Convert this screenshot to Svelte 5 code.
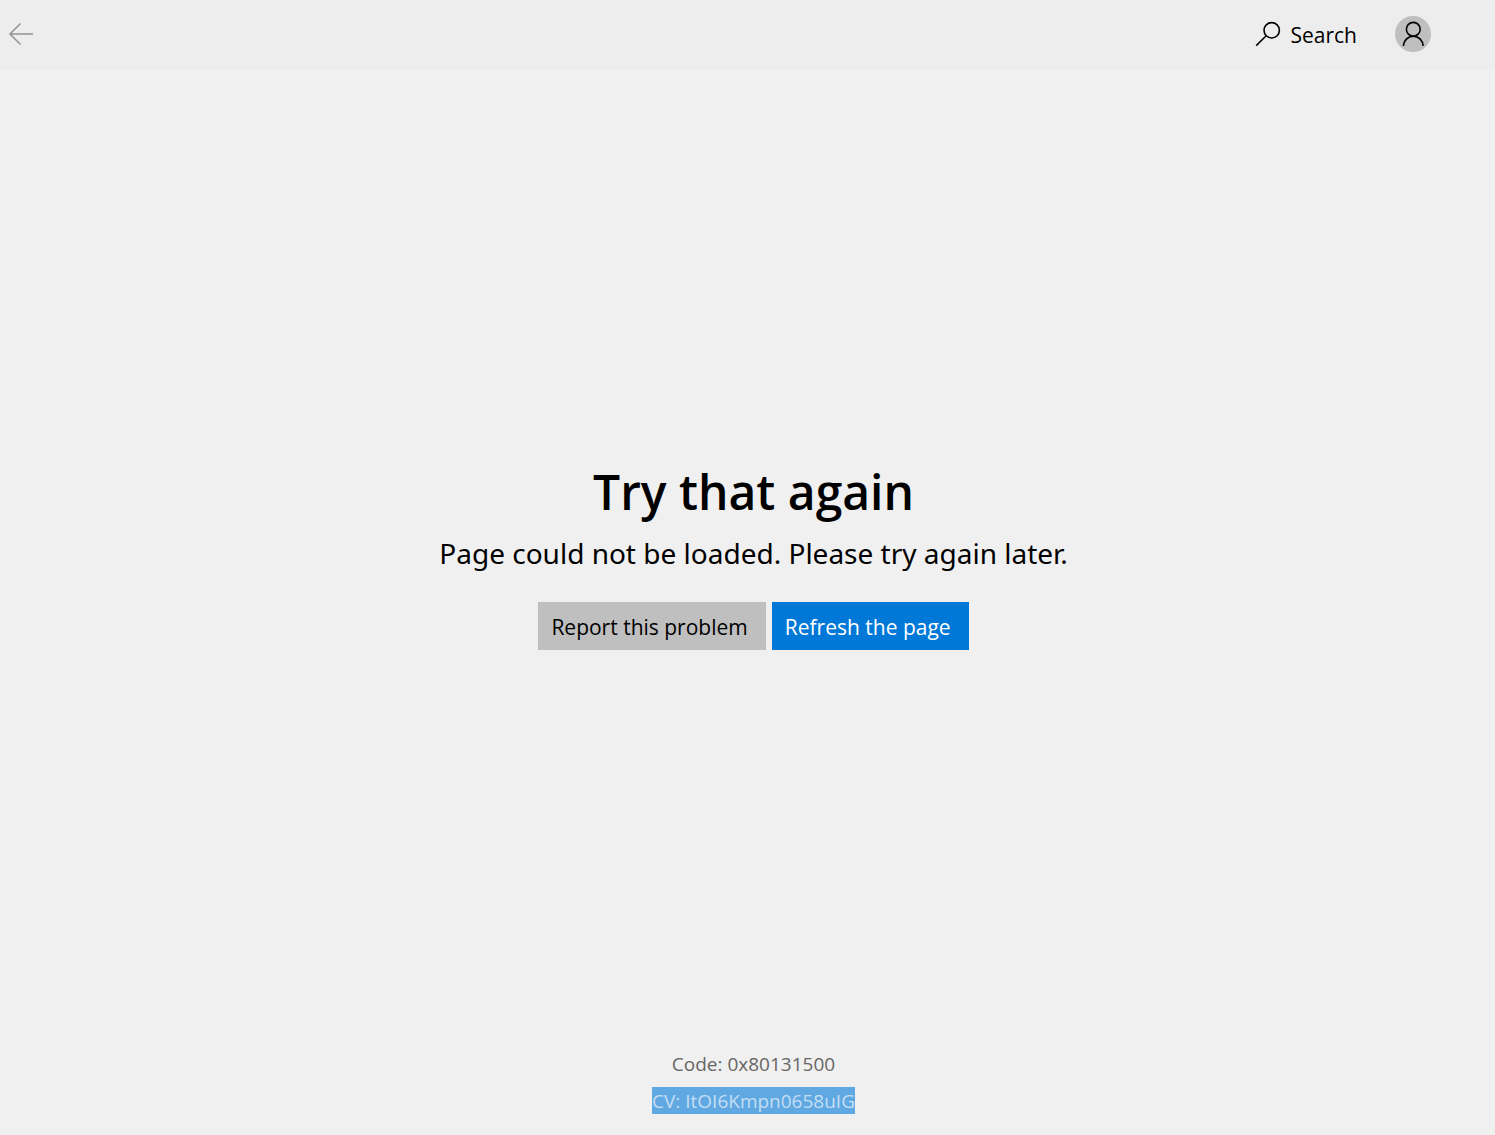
<script>
  const code = '0x80131500';
  const cv = 'ItOI6Kmpn0658uIG';
</script>

<div class="page">
  <header>
    <button aria-label="Back">
      <svg width="26" height="24" viewBox="0 0 26 24" fill="none" stroke="#949494" stroke-width="1.5">
        <path d="M25 12H2M12.500 1.500L2 12l10.500 10.500" />
      </svg>
    </button>
    <button class="search">
      <svg width="26" height="26" viewBox="0 0 26 26" fill="none" stroke="#000" stroke-width="1.600">
        <circle cx="16.700" cy="9.300" r="7.700" />
        <path d="M11.200 14.800L1.200 24.600" />
      </svg>
      <span>Search</span>
    </button>
    <button class="account" aria-label="Account">
      <svg width="36" height="36" viewBox="0 0 36 36" fill="none" stroke="#000" stroke-width="1.600">
        <circle cx="18.300" cy="13.300" r="6.900" />
        <path d="M8.500 30a9.800 9.800 0 0 1 19.600 0" />
      </svg>
    </button>
  </header>
  <main>
    <h1>Try that again</h1>
    <p>Page could not be loaded. Please try again later.</p>
    <div class="actions">
      <button class="report">Report this problem</button>
      <button class="refresh">Refresh the page</button>
    </div>
  </main>
  <footer>
    <div>Code: {code}</div>
    <div class="selected">CV: {cv}</div>
  </footer>
</div>

<style>
  :global(body) {
    margin: 0;
  }
  .page {
    display: flex;
    flex-direction: column;
    min-height: 100vh;
    background: #f0f0f0;
    color: #000;
    font-family: 'Segoe UI', 'Open Sans', 'Noto Sans', sans-serif;
  }
  button {
    border: 0;
    padding: 0;
    background: none;
    color: inherit;
    font: inherit;
    white-space: nowrap;
  }
  svg {
    display: block;
  }
  header {
    display: flex;
    align-items: center;
    box-sizing: border-box;
    height: 70px;
    padding: 0 64px 2px 8px;
    background: #ededed;
  }
  .search {
    display: flex;
    align-items: center;
    gap: 10px;
    margin-left: auto;
    margin-right: 38px;
    font-size: 21px;
  }
  .search span {
    padding-top: 2px;
  }
  .account {
    border-radius: 50%;
    background: #bfbfbf;
  }
  main {
    flex: 1;
    display: flex;
    flex-direction: column;
    align-items: center;
    justify-content: center;
    padding: 0 0 10px 12px;
  }
  h1 {
    margin: 0;
    font-size: 48px;
    font-weight: 600;
    line-height: 64px;
  }
  p {
    margin: 9px 0 29px;
    font-family: 'Segoe UI', 'Noto Sans', sans-serif;
    font-size: 28px;
    line-height: 40px;
    text-align: center;
  }
  .actions {
    display: flex;
    gap: 6px;
  }
  .actions button {
    height: 48px;
    padding: 2px 18px 0 13px;
    font-size: 21px;
  }
  .actions .report {
    background: #bfbfbf;
  }
  .actions .refresh {
    background: #0078d7;
    color: #fff;
  }
  footer {
    display: flex;
    flex-direction: column;
    align-items: center;
    gap: 10px;
    padding: 0 0 21px 12px;
    color: #666;
    font-size: 19px;
    line-height: 27px;
  }
  footer div {
    box-sizing: border-box;
    height: 27px;
    padding-top: 1px;
  }
  .selected {
    background: #60a8e2;
    color: #c4def4;
  }
</style>
